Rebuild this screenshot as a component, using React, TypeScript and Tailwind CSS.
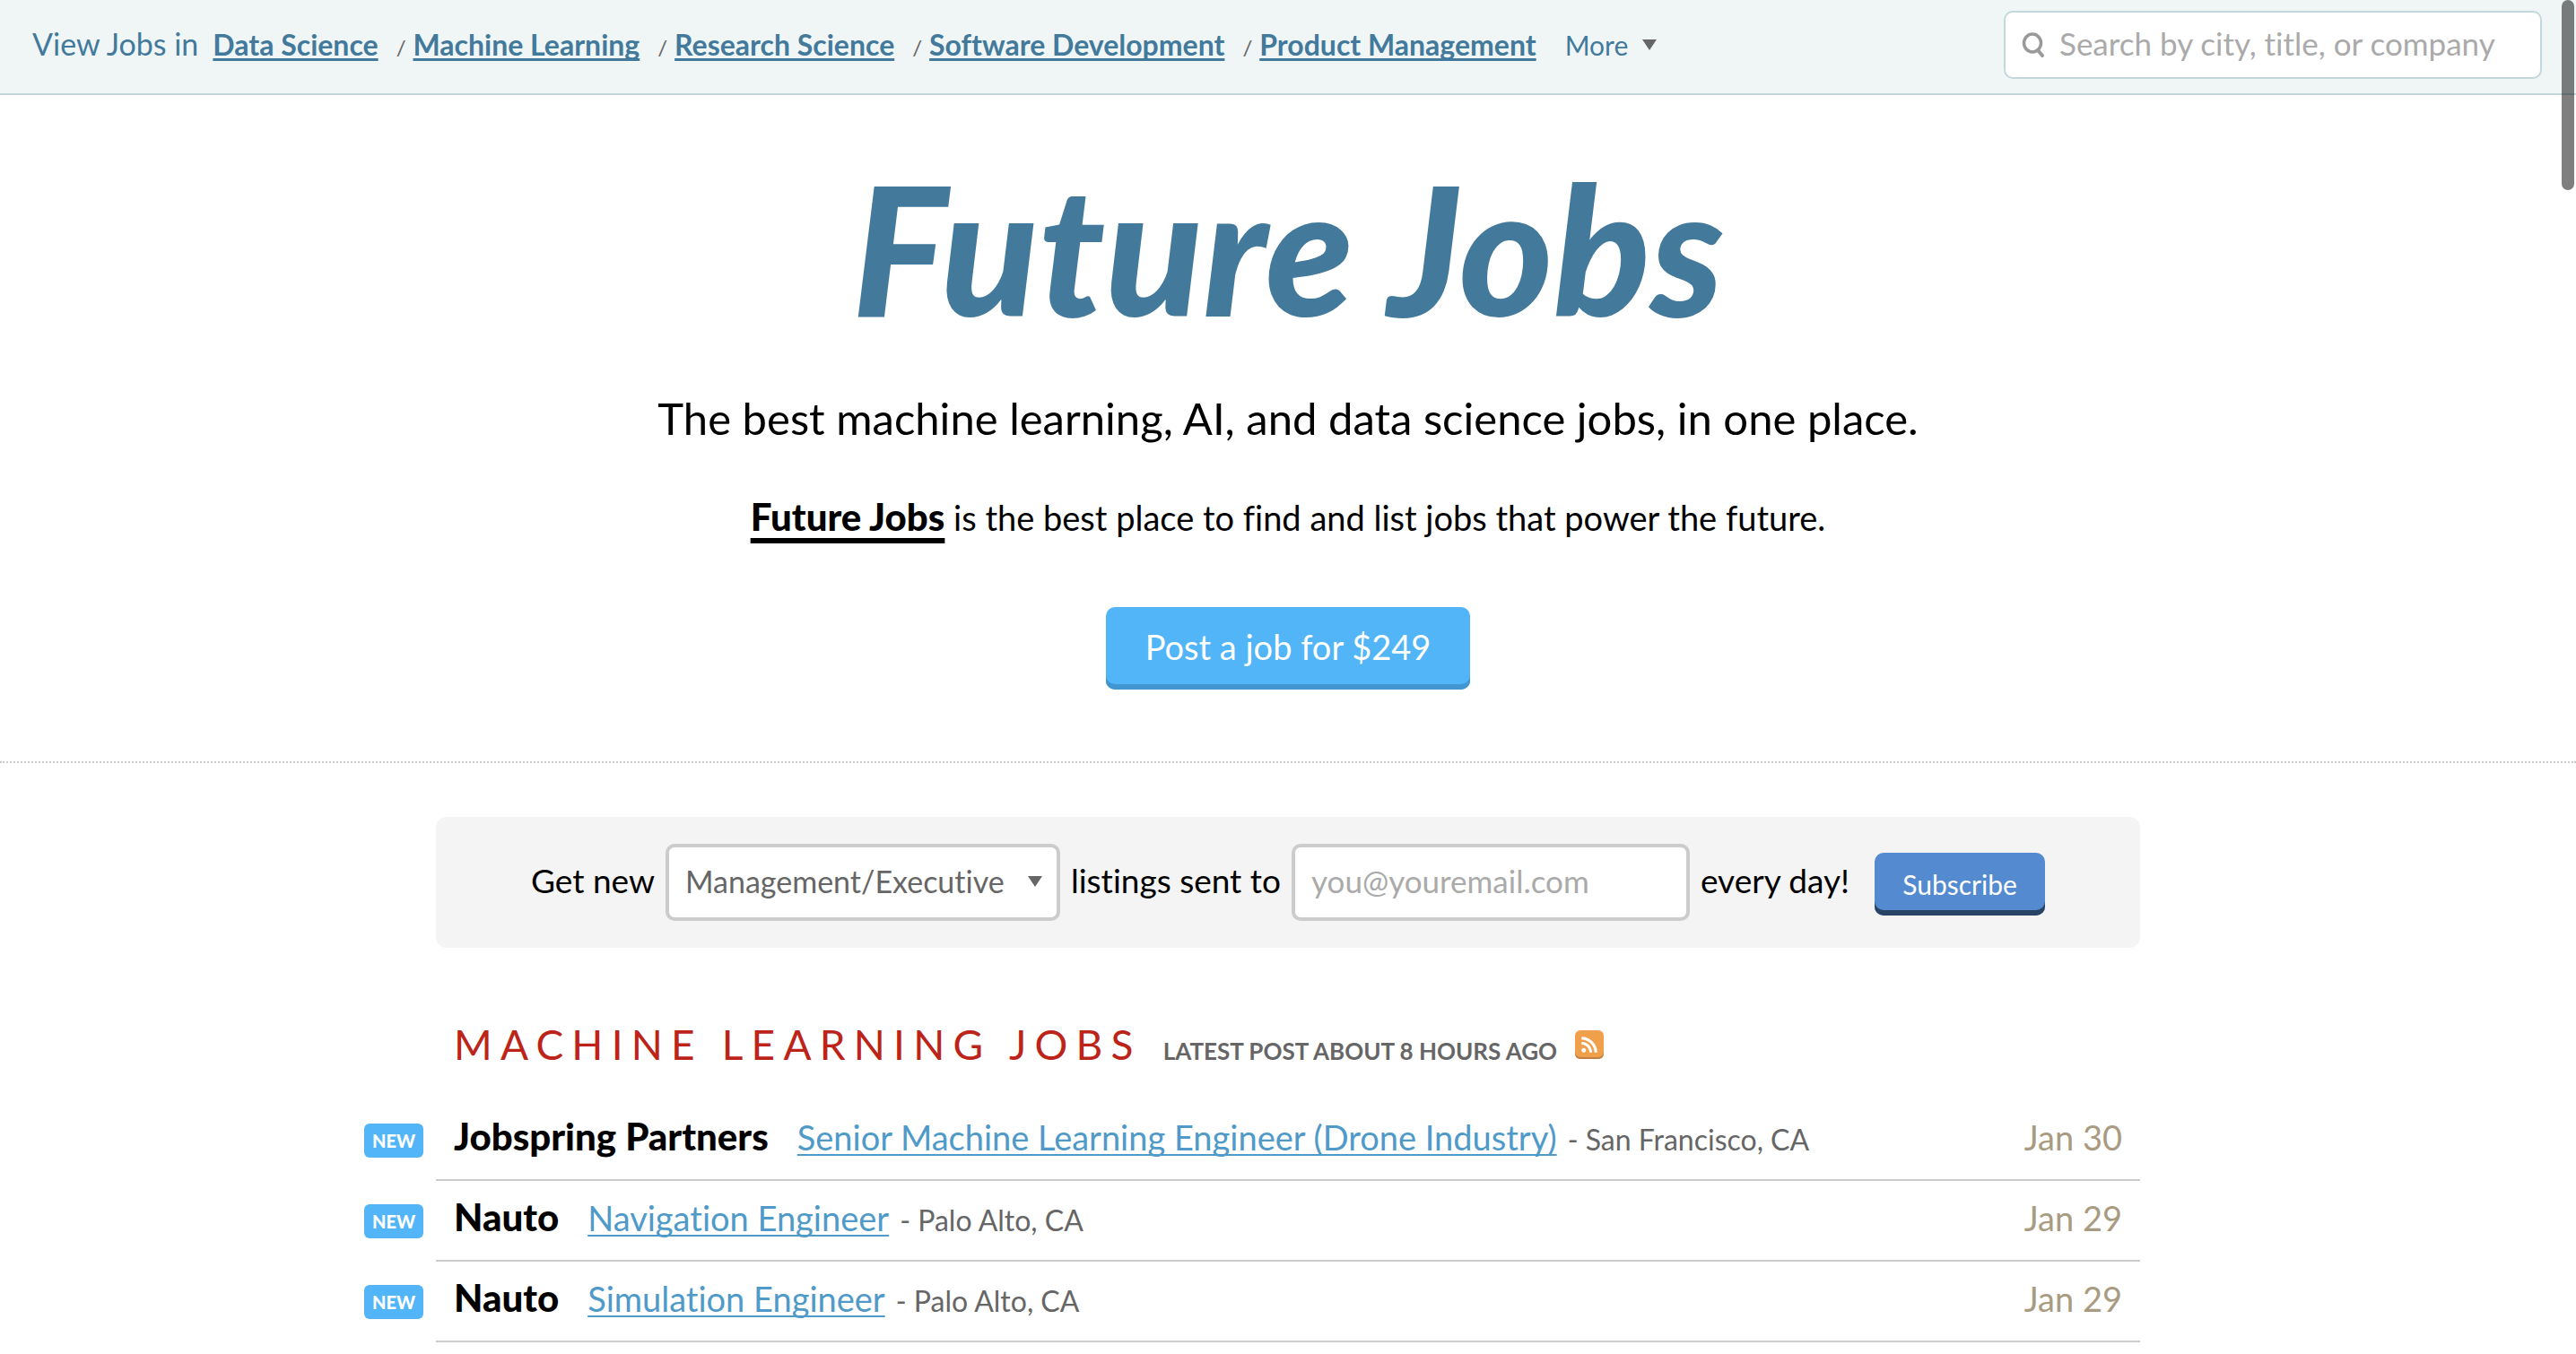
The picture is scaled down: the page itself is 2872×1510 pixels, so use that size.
import { clsx } from 'clsx';
import { FaRss } from 'react-icons/fa';

const categories = [
  'Data Science',
  'Machine Learning',
  'Research Science',
  'Software Development',
  'Product Management',
];

const jobs = [
  {
    id: 1,
    company: 'Jobspring Partners',
    title: 'Senior Machine Learning Engineer (Drone Industry)',
    location: 'San Francisco, CA',
    date: 'Jan 30',
  },
  { id: 2, company: 'Nauto', title: 'Navigation Engineer', location: 'Palo Alto, CA', date: 'Jan 29' },
  { id: 3, company: 'Nauto', title: 'Simulation Engineer', location: 'Palo Alto, CA', date: 'Jan 29' },
];

function Caret({ className }: { className?: string }) {
  return (
    <svg viewBox="0 0 16 12" className={clsx('h-3 w-4 fill-[#666]', className)} aria-hidden="true">
      <path d="M0 0h16L8 12z" />
    </svg>
  );
}

function TopBar() {
  return (
    <header className="flex items-center justify-between border-b-2 border-[#c3d8da] bg-[#f0f6f6] pt-3 pr-[38px] pb-4 pl-9 text-[#437a9c]">
      <nav className="flex items-baseline pb-1 whitespace-nowrap">
        <span className="mr-4 text-[34px]">View Jobs in</span>
        <ul className="flex items-baseline text-[32px]">
          {categories.map((name, i) => (
            <li key={name} className="flex items-baseline">
              {i > 0 && <span className="mr-2 ml-5 text-2xl text-[#666]">/</span>}
              <a
                href="#"
                className="font-bold underline decoration-3 underline-offset-3 [text-decoration-skip-ink:none]"
              >
                {name}
              </a>
            </li>
          ))}
        </ul>
        <button type="button" className="ml-8 flex items-center gap-4 text-[30px]">
          More
          <Caret />
        </button>
      </nav>
      <label className="flex h-[76px] w-[600px] items-center gap-4 rounded-[10px] border-2 border-[#c3d8da] bg-white pl-[18px]">
        <svg viewBox="0 0 26 28" className="h-7 w-[26px] fill-none stroke-[#999]" aria-hidden="true">
          <ellipse cx="12" cy="12" rx="9.5" ry="10" strokeWidth="3.5" />
          <path d="M18 20l5 6" strokeWidth="4" strokeLinecap="round" />
        </svg>
        <input
          type="search"
          aria-label="Search jobs"
          placeholder="Search by city, title, or company"
          className="min-w-0 flex-1 pb-1 text-[35px] outline-none placeholder:text-[#aaa]"
        />
      </label>
    </header>
  );
}

function Hero() {
  return (
    <section className="flex flex-col items-center border-b-2 border-dotted border-[#ccc] pt-20 pb-20 text-center">
      <h1 className="text-[200px] leading-[180px] font-black text-[#437a9c] italic">Future Jobs</h1>
      <p className="mt-[70px] text-[49px] leading-[60px]">
        The best machine learning, AI, and data science jobs, in one place.
      </p>
      <p className="mt-14 text-[38px] leading-[48px]">
        <a
          href="#"
          className="text-[42px] font-black underline decoration-6 underline-offset-8 [text-decoration-skip-ink:none]"
        >
          Future Jobs
        </a>{' '}
        is the best place to find and list jobs that power the future.
      </p>
      <button
        type="button"
        className="mt-[76px] h-[92px] rounded-[10px] bg-[#51b5f8] px-11 pb-1 text-[38px] text-white shadow-[inset_0_-6px_0_#4196d1]"
      >
        Post a job for $249
      </button>
    </section>
  );
}

function Subscribe() {
  return (
    <form className="flex h-[146px] items-center justify-center gap-3 rounded-xl bg-[#f4f4f4] text-[37px] whitespace-nowrap">
      <label htmlFor="category" className="pb-1">
        Get new
      </label>
      <div className="relative">
        <select
          id="category"
          className="h-[86px] w-[440px] appearance-none rounded-[10px] border-4 border-[#ccc] bg-white pb-1 pl-[18px] text-[34px] text-[#666]"
        >
          <option>Management/Executive</option>
          {categories.map((name) => (
            <option key={name}>{name}</option>
          ))}
        </select>
        <Caret className="pointer-events-none absolute top-9 right-5" />
      </div>
      <label htmlFor="email" className="pb-1">
        listings sent to
      </label>
      <input
        id="email"
        type="email"
        placeholder="you@youremail.com"
        className="h-[86px] w-[444px] rounded-[10px] border-4 border-[#ccc] bg-white pb-1 pl-[18px] text-[35px] placeholder:text-[#aaa]"
      />
      <span className="pb-1">every day!</span>
      <button
        type="button"
        className="mt-1 ml-4 h-[70px] w-[190px] rounded-[10px] bg-[#548ad0] text-[30px] text-white shadow-[inset_0_-6px_0_#294365]"
      >
        Subscribe
      </button>
    </form>
  );
}

function JobList() {
  return (
    <section className="mt-20">
      <div className="flex items-baseline pl-5">
        <h2 className="text-[46px] leading-[56px] tracking-[0.2em] text-[#bc2419] uppercase">
          Machine Learning Jobs
        </h2>
        <p className="ml-6 text-[26px] font-bold text-[#666] uppercase">Latest post about 8 hours ago</p>
        <a
          href="#"
          aria-label="RSS feed"
          className="ml-5 flex size-8 items-center justify-center self-center rounded-md bg-[#f0a04b] text-white shadow-[inset_0_-2px_0_#c08040]"
        >
          <FaRss className="size-5" />
        </a>
      </div>
      <ul className="mt-[34px]">
        {jobs.map((job) => (
          <li key={job.id} className="-ml-20 flex">
            <div className="w-20 pt-[26px]">
              <span className="flex h-[38px] w-[66px] items-center justify-center rounded-md bg-[#51b5f8] text-xl font-black text-white">
                NEW
              </span>
            </div>
            <div className="flex h-[90px] flex-1 items-baseline border-b-2 border-[#ccc] px-5 pt-4 text-[38px] leading-[48px] whitespace-nowrap">
              <b className="text-[42px] font-black">{job.company}</b>
              <a
                href="#"
                className="ml-8 text-[#4f9ac9] underline decoration-2 underline-offset-4 [text-decoration-skip-ink:none]"
              >
                {job.title}
              </a>
              <span className="ml-3 text-[32px] text-[#666]">- {job.location}</span>
              <time className="ml-auto text-[#a99b81]">{job.date}</time>
            </div>
          </li>
        ))}
      </ul>
    </section>
  );
}

export default function App() {
  return (
    <div className="bg-white font-['Lato','Open_Sans',sans-serif] text-black [font-variant-ligatures:none]">
      <TopBar />
      <Hero />
      <main className="mx-auto mt-[60px] max-w-[1900px]">
        <Subscribe />
        <JobList />
      </main>
      {/* overlay scrollbar thumb */}
      <div className="fixed top-0 right-[2px] h-[212px] w-[14px] rounded-full bg-black/50" />
    </div>
  );
}
